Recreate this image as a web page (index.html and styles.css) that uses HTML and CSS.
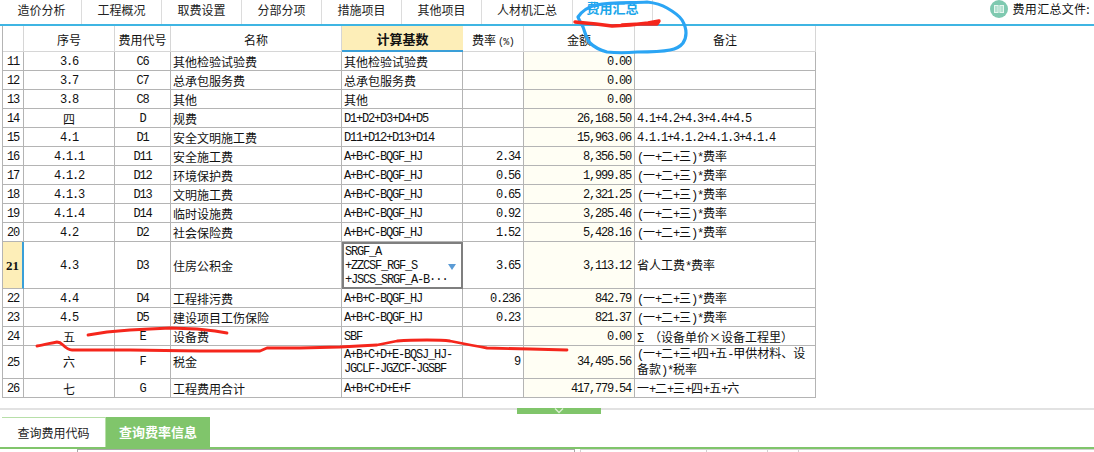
FILE: index.html
```html
<!DOCTYPE html>
<html lang="zh-CN">
<head>
<meta charset="utf-8">
<title>费用汇总</title>
<link rel="stylesheet" href="styles.css">
</head>
<body>
<div class="page">
  <nav class="tabbar">
    <a class="tab">造价分析</a>
    <a class="tab">工程概况</a>
    <a class="tab">取费设置</a>
    <a class="tab">分部分项</a>
    <a class="tab">措施项目</a>
    <a class="tab">其他项目</a>
    <a class="tab tab-wide">人材机汇总</a>
    <a class="tab tab-active">费用汇总</a>
    <div class="file-label">
      <svg class="book" viewBox="0 0 18 18" aria-hidden="true">
        <circle cx="9" cy="9" r="9" fill="#7fc9b0"/>
        <path d="M4 5h4.6v8H4zM9.4 5H14v8H9.4z" fill="#e6f6ef"/>
        <path d="M5 7h2.6M5 9h2.6M5 11h2.6M10.4 7H13M10.4 9H13M10.4 11H13" stroke="#7fc9b0" stroke-width="1"/>
      </svg>
      <span class="file-text">费用汇总文件:</span>
    </div>
  </nav>

  <table class="grid">
    <colgroup>
      <col class="c-no"><col class="c-seq"><col class="c-code"><col class="c-name">
      <col class="c-base"><col class="c-rate"><col class="c-amt"><col class="c-note">
    </colgroup>
    <thead>
      <tr>
        <th></th><th>序号</th><th>费用代号</th><th>名称</th>
        <th class="th-active">计算基数</th><th>费率<span class="m small">(%)</span></th><th>金额</th><th>备注</th>
      </tr>
    </thead>
    <tbody>
      <tr><td class="no m">11</td><td class="ctr m">3.6</td><td class="ctr m">C6</td><td>其他检验试验费</td><td>其他检验试验费</td><td class="num m"></td><td class="num m amt">0.00</td><td></td></tr>
      <tr><td class="no m">12</td><td class="ctr m">3.7</td><td class="ctr m">C7</td><td>总承包服务费</td><td>总承包服务费</td><td class="num m"></td><td class="num m amt">0.00</td><td></td></tr>
      <tr><td class="no m">13</td><td class="ctr m">3.8</td><td class="ctr m">C8</td><td>其他</td><td>其他</td><td class="num m"></td><td class="num m amt">0.00</td><td></td></tr>
      <tr><td class="no m">14</td><td class="ctr">四</td><td class="ctr m">D</td><td>规费</td><td class="m">D1+D2+D3+D4+D5</td><td class="num m"></td><td class="num m amt">26,168.50</td><td class="m">4.1+4.2+4.3+4.4+4.5</td></tr>
      <tr><td class="no m">15</td><td class="ctr m">4.1</td><td class="ctr m">D1</td><td>安全文明施工费</td><td class="m">D11+D12+D13+D14</td><td class="num m"></td><td class="num m amt">15,963.06</td><td class="m">4.1.1+4.1.2+4.1.3+4.1.4</td></tr>
      <tr><td class="no m">16</td><td class="ctr m">4.1.1</td><td class="ctr m">D11</td><td>安全施工费</td><td class="m">A+B+C-BQGF_HJ</td><td class="num m">2.34</td><td class="num m amt">8,356.50</td><td><span class="m">(</span>一<span class="m">+</span>二<span class="m">+</span>三<span class="m">)*</span>费率</td></tr>
      <tr><td class="no m">17</td><td class="ctr m">4.1.2</td><td class="ctr m">D12</td><td>环境保护费</td><td class="m">A+B+C-BQGF_HJ</td><td class="num m">0.56</td><td class="num m amt">1,999.85</td><td><span class="m">(</span>一<span class="m">+</span>二<span class="m">+</span>三<span class="m">)*</span>费率</td></tr>
      <tr><td class="no m">18</td><td class="ctr m">4.1.3</td><td class="ctr m">D13</td><td>文明施工费</td><td class="m">A+B+C-BQGF_HJ</td><td class="num m">0.65</td><td class="num m amt">2,321.25</td><td><span class="m">(</span>一<span class="m">+</span>二<span class="m">+</span>三<span class="m">)*</span>费率</td></tr>
      <tr><td class="no m">19</td><td class="ctr m">4.1.4</td><td class="ctr m">D14</td><td>临时设施费</td><td class="m">A+B+C-BQGF_HJ</td><td class="num m">0.92</td><td class="num m amt">3,285.46</td><td><span class="m">(</span>一<span class="m">+</span>二<span class="m">+</span>三<span class="m">)*</span>费率</td></tr>
      <tr><td class="no m">20</td><td class="ctr m">4.2</td><td class="ctr m">D2</td><td>社会保险费</td><td class="m">A+B+C-BQGF_HJ</td><td class="num m">1.52</td><td class="num m amt">5,428.16</td><td><span class="m">(</span>一<span class="m">+</span>二<span class="m">+</span>三<span class="m">)*</span>费率</td></tr>
      <tr class="row-tall">
        <td class="no no-active">21</td><td class="ctr m">4.3</td><td class="ctr m">D3</td><td>住房公积金</td>
        <td class="m editing">SRGF_A<br>+ZZCSF_RGF_S<br>+JSCS_SRGF_A-B<span class="dots">···</span><span class="dropdown"></span></td>
        <td class="num m">3.65</td><td class="num m amt">3,113.12</td><td>省人工费<span class="m">*</span>费率</td>
      </tr>
      <tr><td class="no m">22</td><td class="ctr m">4.4</td><td class="ctr m">D4</td><td>工程排污费</td><td class="m">A+B+C-BQGF_HJ</td><td class="num m">0.236</td><td class="num m amt">842.79</td><td><span class="m">(</span>一<span class="m">+</span>二<span class="m">+</span>三<span class="m">)*</span>费率</td></tr>
      <tr><td class="no m">23</td><td class="ctr m">4.5</td><td class="ctr m">D5</td><td>建设项目工伤保险</td><td class="m">A+B+C-BQGF_HJ</td><td class="num m">0.23</td><td class="num m amt">821.37</td><td><span class="m">(</span>一<span class="m">+</span>二<span class="m">+</span>三<span class="m">)*</span>费率</td></tr>
      <tr><td class="no m">24</td><td class="ctr">五</td><td class="ctr m">E</td><td>设备费</td><td class="m">SBF</td><td class="num m"></td><td class="num m amt">0.00</td><td><span class="sig">Σ</span>（设备单价×设备工程里）</td></tr>
      <tr class="row-double">
        <td class="no m">25</td><td class="ctr">六</td><td class="ctr m">F</td><td>税金</td>
        <td class="m">A+B+C+D+E-BQSJ_HJ-<br>JGCLF-JGZCF-JGSBF</td><td class="num m">9</td><td class="num m amt">34,495.56</td>
        <td><span class="m">(</span>一<span class="m">+</span>二<span class="m">+</span>三<span class="m">+</span>四<span class="m">+</span>五<span class="m">-</span>甲供材料、设<br>备款<span class="m">)*</span>税率</td>
      </tr>
      <tr><td class="no m">26</td><td class="ctr">七</td><td class="ctr m">G</td><td>工程费用合计</td><td class="m">A+B+C+D+E+F</td><td class="num m"></td><td class="num m amt">417,779.54</td><td>一<span class="m">+</span>二<span class="m">+</span>三<span class="m">+</span>四<span class="m">+</span>五<span class="m">+</span>六</td></tr>
    </tbody>
  </table>

  <div class="splitter">
    <div class="handle">
      <svg class="chevron" viewBox="0 0 10 6" aria-hidden="true"><path d="M1 0.5l4 4 4-4" fill="none" stroke="#d8efcf" stroke-width="1.4"/></svg>
    </div>
  </div>

  <div class="bottom-tabs">
    <a class="btab">查询费用代码</a>
    <a class="btab btab-active">查询费率信息</a>
  </div>

  <div class="footer-strip">
    <div class="strip-spacer"></div>
    <div class="strip-box strip-left"></div>
    <div class="strip-box strip-right">
      <span class="strip-cell c1"></span><span class="strip-cell c2"></span><span class="strip-cell c3"></span>
    </div>
  </div>
</div>

<svg class="ink" viewBox="0 0 1094 452" aria-hidden="true">
  <path class="ink-blue" d="M578 17C582 11 588 7 596 5C612 2 632 3 647 2C656 3 662 5 667 8C674 12 679 15 682 20C685 25 686 29 686 33C686 38 685 40 683 43C680 47 676 49 670 50C660 52 648 52 637 52C626 53 616 53 607 52C600 50 594 47 590 43C586 38 585 32 583 27C581 23 579 20 578 17"/>
  <path class="ink-red thick" d="M575 22L596 24L612 26L630 25L648 23L659 21L657 24L640 24L622 25"/>
  <path class="ink-red" d="M88 335L107 332L130 330L170 328L197 329L215 331L227 333"/>
  <path class="ink-red" d="M37 346C44 345 51 343 57 342C60 342 61 343 63 345C66 348 68 350 72 350L130 350L200 351L260 351L267 348L300 348L340 347L377 345L397 341C410 340 418 340 427 340C436 340 443 340 450 341C465 344 475 346 487 348L530 349L567 350"/>
</svg>
</body>
</html>
```
FILE: styles.css
```css
* { box-sizing: border-box; }
html, body { margin: 0; padding: 0; background: #fff; }
body {
  width: 1094px;
  height: 452px;
  overflow: hidden;
  position: relative;
  font-family: "Noto Sans CJK SC", sans-serif;
  font-size: 12px;
  color: #111;
}
.page { display: flex; flex-direction: column; height: 452px; }

/* top tabs */
.tabbar {
  display: flex;
  height: 26px;
  flex: none;
  padding-left: 2px;
  border-bottom: 2px solid #3fb5e3;
}
.tab {
  width: 80px;
  height: 24px;
  line-height: 19px;
  text-align: center;
  border-right: 1px solid #dcdcdc;
  color: #222;
}
.tab-wide { width: 91px; }
.tab-active { color: #1ba6ea; font-weight: 700; font-size: 13px; line-height: 16px; }
.file-label {
  margin-left: auto;
  display: flex;
  align-items: flex-start;
  gap: 5px;
  padding-right: 4px;
  line-height: 18px;
}
.file-text { letter-spacing: 0.3px; }
.book { width: 18px; height: 18px; display: block; }

/* grid */
.grid {
  flex: none;
  width: 814px;
  margin-left: 2px;
  table-layout: fixed;
  border-collapse: separate;
  border-spacing: 0;
  border-left: 1px solid #b4b4b4;
}
.c-no { width: 21px; }
.c-seq { width: 91px; }
.c-code { width: 56px; }
.c-name { width: 171px; }
.c-base { width: 121px; }
.c-rate { width: 61px; }
.c-amt { width: 111px; }
.c-note { width: 181px; }

.grid th {
  height: 26px;
  padding: 1px 0 0;
  font-weight: 400;
  border-right: 1px solid #d6d6d6;
  border-bottom: 1px solid #d6d6d6;
}
.grid th.th-active {
  background: #fdeeb8;
  font-weight: 700;
  font-size: 13px;
  border-bottom: 2px solid #3a9fd8;
  border-right: 0;
}
.grid td {
  height: 19px;
  padding: 2px 2px 0;
  line-height: 14px;
  border-right: 1px solid #b4b4b4;
  border-bottom: 1px solid #b4b4b4;
  white-space: nowrap;
  vertical-align: middle;
}
.row-tall td { height: 47px; }
.row-double td { height: 33px; padding-top: 0; }

.m {
  font-family: "Liberation Mono", "DejaVu Sans Mono", monospace;
  font-size: 12px;
  letter-spacing: -1.2px;
}
.small { font-size: 10px; letter-spacing: -0.6px; margin-left: 2px; }
.sig { display: inline-block; width: 12px; }
.grid td.ctr, .grid td.no { text-align: center; }
.grid td.no { padding: 2px 0 0; }
.grid td.num { text-align: right; padding-right: 3px; }
.grid td.amt { background: #fffef4; }
.grid td.no-active {
  background: #fdeeb8;
  font-family: "Liberation Serif", serif;
  font-weight: 700;
  font-size: 13px;
  border-right: 2px solid #3a9fd8;
}
.grid td.editing {
  position: relative;
  padding: 1px 0 0 1px;
  border: 2px solid #7f7f7f;
}
.dots { letter-spacing: -1px; }
.dropdown {
  position: absolute;
  right: 5px;
  top: 20px;
  width: 0;
  height: 0;
  border-left: 4px solid transparent;
  border-right: 4px solid transparent;
  border-top: 6px solid #5b9bd5;
}

/* splitter */
.splitter {
  position: relative;
  flex: none;
  height: 2px;
  margin-top: 10px;
  background: #e2e2e2;
}
.handle {
  position: absolute;
  left: 517px;
  top: 0;
  width: 84px;
  height: 6px;
  background: #80c56b;
  display: flex;
  justify-content: center;
}
.chevron { width: 10px; height: 6px; display: block; }

/* bottom tabs */
.bottom-tabs {
  flex: none;
  display: flex;
  height: 32px;
  margin-top: 7px;
  padding-left: 2px;
  border-bottom: 2px solid #80c56b;
}
.btab {
  width: 104px;
  height: 30px;
  line-height: 30px;
  text-align: center;
  border-top: 1px solid #b7dfa8;
  border-right: 1px solid #b7dfa8;
  font-size: 12px;
  color: #222;
}
.btab-active {
  width: 104px;
  background: #80c56b;
  border: 0;
  color: #fff;
  font-weight: 700;
  font-size: 13px;
}

/* strip under the tabs */
.footer-strip { flex: 1; display: flex; }
.strip-spacer { width: 77px; flex: none; }
.strip-box { border-top: 1px solid #a8a8a8; border-left: 1px solid #a8a8a8; height: 3px; }
.strip-left { width: 498px; border-right: 1px solid #a8a8a8; flex: none; }
.strip-right {
  flex: 1;
  display: flex;
  margin-left: 5px;
  border-color: #d0d0d0;
}
.strip-cell { height: 2px; border-right: 1px solid #d0d0d0; flex: none; }
.c1 { width: 126px; }
.c2 { width: 61px; }
.c3 { width: 31px; }

/* hand-drawn marks over the screenshot */
.ink {
  position: absolute;
  left: 0;
  top: 0;
  width: 1094px;
  height: 452px;
  pointer-events: none;
}
.ink-blue { fill: none; stroke: #2ba5f4; stroke-width: 3.2; stroke-linecap: round; stroke-linejoin: round; }
.ink-red { fill: none; stroke: #f5261c; stroke-width: 2.8; stroke-linecap: round; stroke-linejoin: round; }
.ink-red.thick { stroke-width: 3.4; }
```
